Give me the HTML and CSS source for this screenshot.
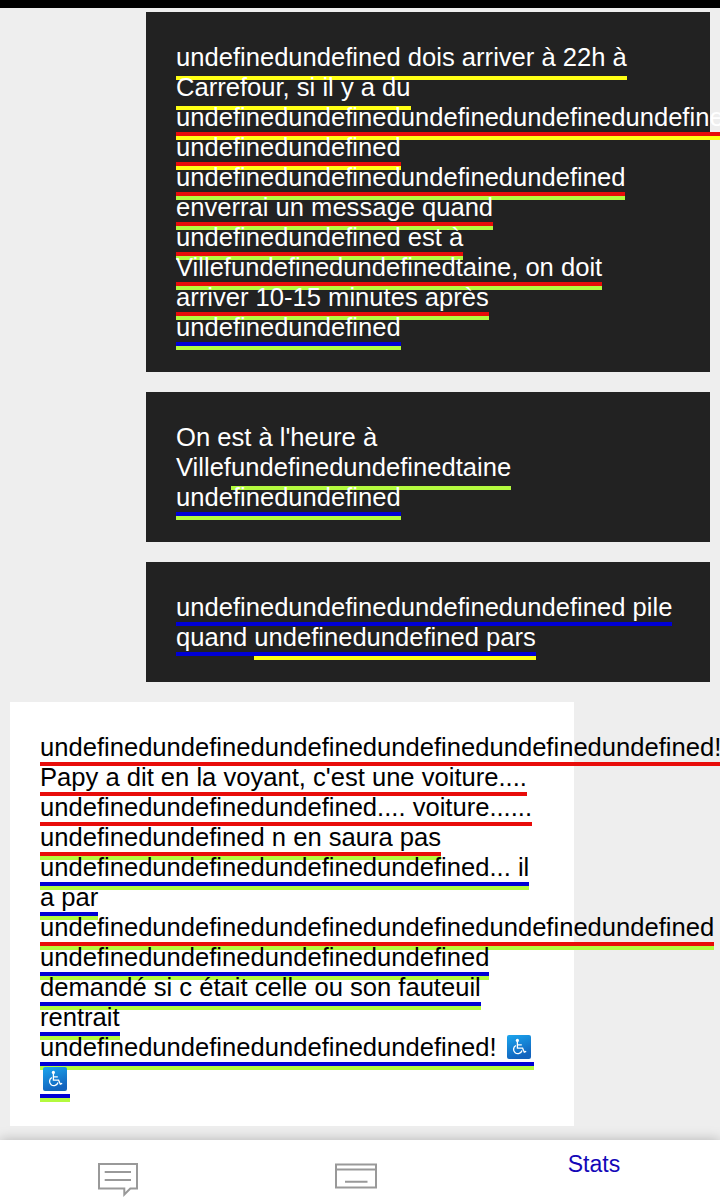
FILE: index.html
```html
<!DOCTYPE html>
<html lang="fr">
<head>
<meta charset="utf-8">
<title>Messages</title>
<link rel="stylesheet" href="styles.css">
</head>
<body>
<svg class="symbols" aria-hidden="true">
  <defs>
    <linearGradient id="tile" x1="0" y1="0" x2="0.35" y2="1">
      <stop offset="0" stop-color="#1ba6ee"/>
      <stop offset="1" stop-color="#1263bd"/>
    </linearGradient>
    <symbol id="wheelchair" viewBox="0 0 24 24">
      <rect width="24" height="24" rx="2" fill="url(#tile)"/>
      <circle cx="10.4" cy="5.4" r="1.6" fill="#fff"/>
      <path d="M10.4 6.5v6.7h5.2l1.7 4 1.9-.8M10.6 9.9h4.2M8.9 10.5a4.3 4.3 0 1 0 6.1 5" fill="none" stroke="#fff" stroke-width="1.3"/>
    </symbol>
  </defs>
</svg>
<div class="app">
  <div class="status-bar"></div>
  <main class="thread">
    <article class="message sent">
      <p class="line"><span class="low yellow">undefinedundefined dois arriver à 22h à</span></p>
      <p class="line"><span class="low yellow">Carrefour, si il y a du</span></p>
      <p class="line"><span class="low yellow"><span class="high red">undefinedundefinedundefinedundefinedundefined</span></span></p>
      <p class="line"><span class="low yellow"><span class="high red">undefinedundefined</span></span></p>
      <p class="line"><span class="low lime"><span class="high red">undefinedundefinedundefinedundefined</span></span></p>
      <p class="line"><span class="low lime"><span class="high red">enverrai un message quand</span></span></p>
      <p class="line"><span class="low lime"><span class="high red">undefinedundefined est à</span></span></p>
      <p class="line"><span class="low lime"><span class="high red">Villefundefinedundefinedtaine, on doit</span></span></p>
      <p class="line"><span class="low lime"><span class="high red">arriver 10-15 minutes après</span></span></p>
      <p class="line"><span class="low lime"><span class="high blue">undefinedundefined</span></span></p>
    </article>
    <article class="message sent">
      <p class="line">On est à l'heure à</p>
      <p class="line">Villef<span class="low lime">undefinedundefinedtaine</span></p>
      <p class="line"><span class="low lime"><span class="high blue">undefinedundefined</span></span></p>
    </article>
    <article class="message sent">
      <p class="line"><span class="high blue">undefinedundefinedundefinedundefined pile</span></p>
      <p class="line"><span class="high blue">quand <span class="low yellow">undefinedundefined pars</span></span></p>
    </article>
    <article class="message received">
      <p class="line"><span class="high red">undefinedundefinedundefinedundefinedundefinedundefined!</span></p>
      <p class="line"><span class="high red">Papy a dit en la voyant, c'est une voiture....</span></p>
      <p class="line"><span class="high red">undefinedundefinedundefined.... voiture......</span></p>
      <p class="line"><span class="low lime"><span class="high red">undefinedundefined n en saura pas</span></span></p>
      <p class="line"><span class="low lime"><span class="high blue">undefinedundefinedundefinedundefined... il</span></span></p>
      <p class="line"><span class="low lime"><span class="high blue">a par</span></span></p>
      <p class="line"><span class="low lime"><span class="high red">undefinedundefinedundefinedundefinedundefinedundefined</span></span></p>
      <p class="line"><span class="low lime"><span class="high blue">undefinedundefinedundefinedundefined</span></span></p>
      <p class="line"><span class="low lime"><span class="high blue">demandé si c était celle ou son fauteuil</span></span></p>
      <p class="line"><span class="low lime"><span class="high blue">rentrait</span></span></p>
      <p class="line tall"><span class="low lime"><span class="high blue">undefinedundefinedundefinedundefined! <svg class="emoji"><use href="#wheelchair"/></svg></span></span></p>
      <p class="line tall"><span class="low lime"><span class="high blue"><svg class="emoji"><use href="#wheelchair"/></svg></span></span></p>
    </article>
  </main>
  <nav class="tabs">
    <a class="tab"><svg class="icon" viewBox="0 0 44 36"><path d="M3 3h38v24.5H34.3L28.3 33.5v-6H3zM8.7 11H35M8.7 19H35"/></svg></a>
    <a class="tab"><svg class="icon" viewBox="0 0 44 36"><path d="M2 3.5h40v23H2zM2 8.5h40M11 20.8h22.5"/></svg></a>
    <a class="tab label">Stats</a>
  </nav>
</div>
</body>
</html>
```
FILE: styles.css
```css
* { box-sizing: border-box; }

body {
  margin: 0;
  overflow: hidden;
  background: #eee;
  font-family: "Liberation Sans", Arial, sans-serif;
}

.symbols { display: block; width: 0; height: 0; }

.app {
  display: flex;
  flex-direction: column;
  height: 1200px;
  overflow: hidden;
}

.status-bar { flex: none; height: 8px; background: #000; }

.thread {
  flex: 1;
  display: flex;
  flex-direction: column;
  gap: 20px;
  min-height: 0;
  padding: 4px 10px 0;
}

.message {
  flex: none;
  width: 564px;
  padding: 30px;
  font-size: 25.58px;
  line-height: 30px;
  white-space: nowrap;
}

.sent { align-self: flex-end; background: #222; color: #fff; }
.received { align-self: flex-start; background: #fff; color: #000; }

.line { height: 30px; margin: 0; }
.line.tall { height: 32px; }

.high { padding-bottom: 1px; border-bottom: 4px solid; }
.low { padding-bottom: 5px; border-bottom: 4px solid; }

.yellow { border-color: #ffff14; }
.red { border-color: #e80c0a; }
.lime { border-color: #b3fa3e; }
.blue { border-color: #0000d6; }

.emoji {
  width: 24px;
  height: 24px;
  margin: 0 3px;
  vertical-align: -3px;
}

.tabs {
  flex: none;
  display: grid;
  grid-template-columns: repeat(3, 238px);
  height: 60px;
  background: #fff;
  box-shadow: 0 0 12px rgba(0, 0, 0, 0.25);
}

.tab { display: flex; justify-content: center; padding-top: 21px; }
.tab.label {
  padding: 10px 2px 0 0;
  color: #1408b8;
  font-size: 23px;
  line-height: 28px;
}

.icon {
  width: 44px;
  height: 36px;
  margin-left: -2px;
  fill: none;
  stroke: #999;
  stroke-width: 2;
}
```
